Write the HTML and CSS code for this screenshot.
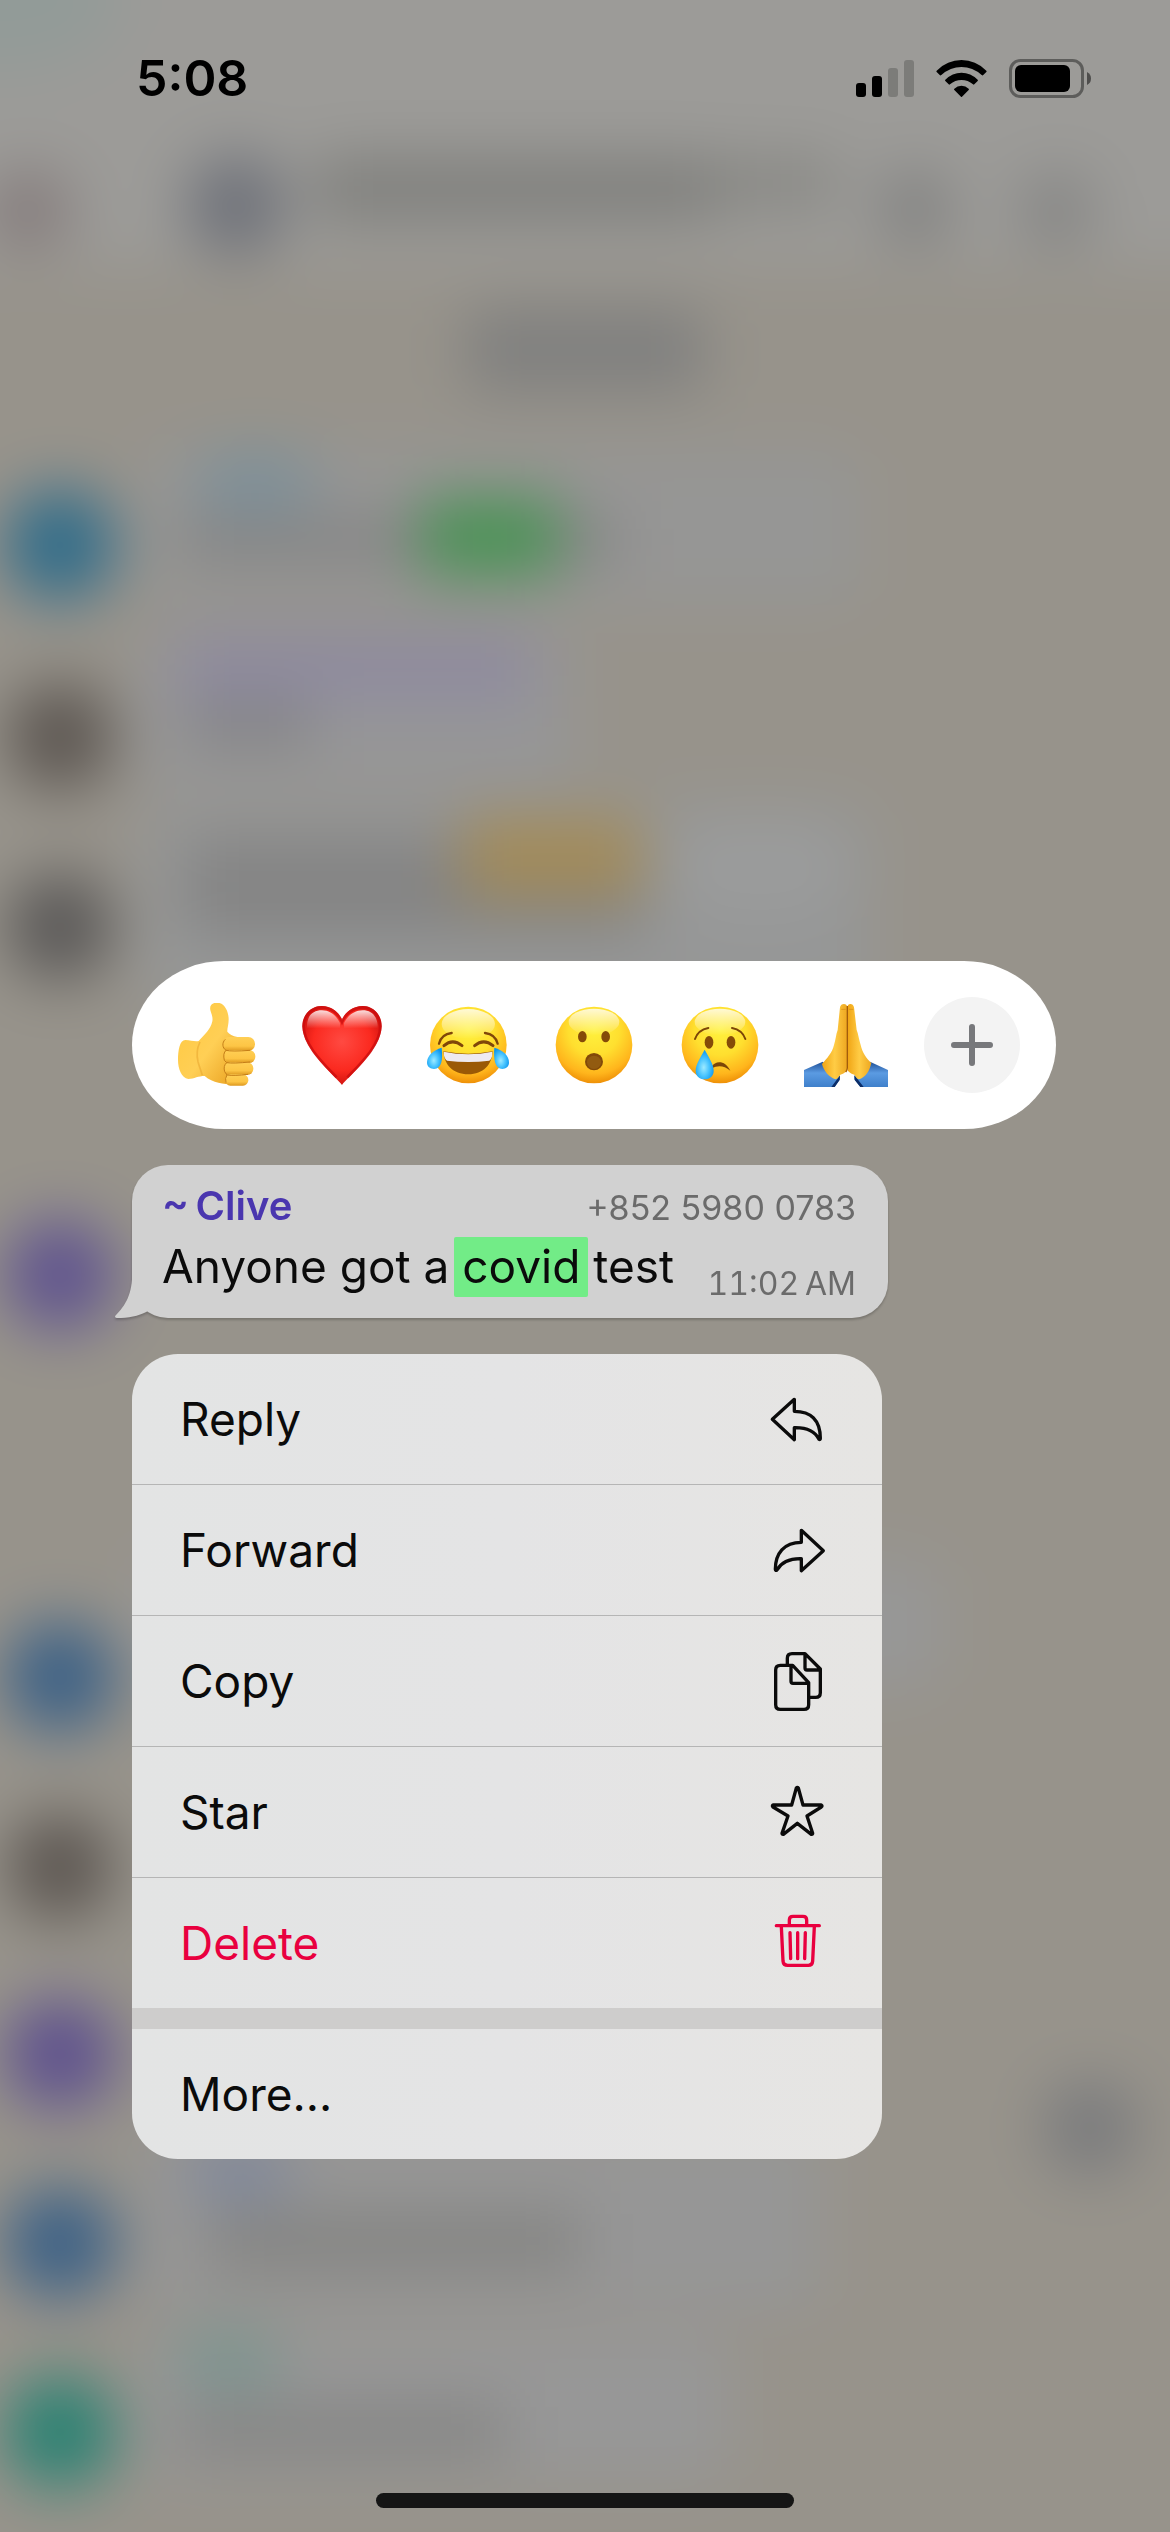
FILE: index.html
```html
<!DOCTYPE html>
<html lang="en">
<head>
<meta charset="utf-8">
<meta name="viewport" content="width=device-width, initial-scale=1">
<title>Message actions</title>
<link rel="stylesheet" href="styles.css">
</head>
<body>
<!-- Blurred chat behind the message actions -->
<svg class="backdrop" viewBox="0 0 1170 2532" preserveAspectRatio="none" aria-hidden="true">
  <defs>
    <filter id="soft" x="-10%" y="-10%" width="120%" height="120%" color-interpolation-filters="sRGB"><feGaussianBlur stdDeviation="30"/></filter>
  </defs>
  <g filter="url(#soft)">
    <rect x="-100" y="-100" width="1370" height="2732" fill="#97938b"/>
    <rect x="-100" y="-100" width="1370" height="365" fill="#9c9b98"/>
    <ellipse cx="0" cy="0" rx="120" ry="70" fill="#929b98"/>
    <rect x="140" y="450" width="720" height="155" rx="30" fill="#969695"/>
    <rect x="140" y="630" width="430" height="160" rx="30" fill="#969697"/>
    <rect x="140" y="805" width="730" height="200" rx="30" fill="#969797"/>
    <rect x="140" y="1560" width="800" height="130" rx="30" fill="#979797"/>
    <rect x="140" y="2130" width="680" height="180" rx="30" fill="#969696"/>
    <rect x="140" y="2330" width="590" height="150" rx="30" fill="#979797"/>
    <ellipse cx="28" cy="210" rx="44" ry="40" fill="#857c7c"/>
    <circle cx="236" cy="205" r="50" fill="#6f727a"/>
    <rect x="315" y="158" width="400" height="62" fill="#7f7f7c"/>
    <rect x="715" y="160" width="120" height="46" fill="#868682"/>
    <circle cx="915" cy="208" r="38" fill="#828281"/>
    <circle cx="1056" cy="210" r="38" fill="#858584"/>
    <rect x="465" y="308" width="240" height="84" rx="20" fill="#80807f"/>
    <ellipse cx="255" cy="482" rx="64" ry="30" fill="#7b909b"/>
    <rect x="180" y="518" width="440" height="42" fill="#838383"/>
    <rect x="422" y="498" width="136" height="78" fill="#4a9255"/>
    <rect x="180" y="638" width="350" height="60" fill="#8e8aa0"/>
    <rect x="190" y="702" width="120" height="42" fill="#828284"/>
    <rect x="185" y="838" width="460" height="98" fill="#848484"/>
    <rect x="462" y="818" width="180" height="78" fill="#a38b58"/>
    <ellipse cx="760" cy="866" rx="90" ry="46" fill="#9b9c9c"/>
    <circle cx="60" cy="545" r="56" fill="#326d8a"/>
    <circle cx="60" cy="737" r="54" fill="#5e5853"/>
    <circle cx="60" cy="927" r="54" fill="#5c5a59"/>
    <circle cx="60" cy="1275" r="56" fill="#61558e"/>
    <circle cx="60" cy="1677" r="56" fill="#3e6286"/>
    <circle cx="60" cy="1867" r="54" fill="#5e5853"/>
    <circle cx="60" cy="2054" r="56" fill="#5f528d"/>
    <circle cx="60" cy="2243" r="56" fill="#3e6286"/>
    <circle cx="60" cy="2432" r="56" fill="#2c8273"/>
    <circle cx="1090" cy="2128" r="48" fill="#7a7b7d"/>
    <ellipse cx="240" cy="2172" rx="54" ry="30" fill="#7e879c"/>
    <rect x="210" y="2212" width="370" height="58" fill="#848482"/>
    <ellipse cx="228" cy="2360" rx="56" ry="30" fill="#7b9590"/>
    <rect x="180" y="2404" width="325" height="52" fill="#858584"/>
  </g>
</svg>

<div class="screen">
  <header class="status-bar">
    <time class="clock">5:08</time>
    <div class="indicators">
      <svg width="58" height="39" viewBox="0 0 58 39" role="img" aria-label="Signal: 2 of 4 bars">
        <rect x="0" y="24" width="10" height="14" rx="3"/>
        <rect x="16" y="17" width="10" height="21" rx="3"/>
        <rect x="32" y="9" width="10" height="29" rx="3" opacity=".2"/>
        <rect x="48" y="1" width="10" height="37" rx="3" opacity=".2"/>
      </svg>
      <svg width="51" height="39" viewBox="289 54 151 117" role="img" aria-label="Wi-Fi">
        <path d="M290 89Q322 57 364.500 57Q407 57 439 89Q441 91 439 93L429 103Q427 104 425 102Q398 78 364.500 78Q331 78 304 102Q302 104 300 103L290 93Q288 91 290 89Z"/>
        <path d="M316 116Q337 95 364.500 95Q392 95 413 116Q415 118 413 120L403 130Q401 132 399 130Q384 117 364.500 117Q345 117 330 130Q328 132 326 130L316 120Q314 118 316 116Z"/>
        <path d="M343 143Q352 134 364.500 134Q377 134 386 143Q388 145 386 147L366 167Q364.500 169 363 167L343 147Q341 145 343 143Z"/>
      </svg>
      <svg width="82" height="39" viewBox="0 0 82 39" role="img" aria-label="Battery">
        <rect x="1.500" y="1.500" width="72" height="36" rx="10" fill="none" stroke="#000" stroke-opacity=".4" stroke-width="3"/>
        <rect x="6" y="6" width="55" height="27" rx="6"/>
        <path d="M78 13Q82 15 82 19.500Q82 24 78 26Z" opacity=".5"/>
      </svg>
    </div>
  </header>

  <main class="actions">
    <div class="reactions" role="toolbar" aria-label="Reactions">
      <button class="reaction" type="button" aria-label="Thumbs up">
        <svg viewBox="162 159 252 252">
          <defs>
            <linearGradient id="thumb" x1="0" y1="0" x2="1" y2="1"><stop offset="0" stop-color="#ffc83e"/><stop offset=".55" stop-color="#ffcf55"/><stop offset="1" stop-color="#e9a01f"/></linearGradient>
            <linearGradient id="finger" x1="0" y1="0" x2="0" y2="1"><stop offset="0" stop-color="#ffcf55"/><stop offset=".65" stop-color="#fdc545"/><stop offset="1" stop-color="#dd981f"/></linearGradient>
          </defs>
          <path fill="url(#thumb)" d="M272 184C266 165 278 158 291 158C314 158 326 185 326 208C326 225 321 237 322 245C328 252 338 258 352 261L352 403C320 404 282 402 254 378C235 378 223 386 205 387C184 383 174 357 174 330C174 302 179 270 196 270C213 270 224 276 236 273C252 255 272 239 277 214C279 202 275 194 272 184Z"/>
          <path d="M240 276C232 292 228 310 234 335C238 350 243 362 247 376" fill="none" stroke="#e8a52d" stroke-width="5" opacity=".55"/>
          <rect x="308" y="261" width="97" height="42" rx="20" fill="url(#finger)"/>
          <rect x="311" y="300" width="95" height="39" rx="19" fill="url(#finger)"/>
          <rect x="312" y="337" width="88" height="38" rx="18" fill="url(#finger)"/>
          <rect x="315" y="373" width="70" height="34" rx="16" fill="url(#finger)"/>
          <path d="M316 268C305 278 307 294 318 301Q308 310 313 331L320 338Q309 348 314 365L321 375Q314 384 318 398M318 301Q335 305 391 301M320 338Q340 341 390 336M322 375Q342 378 384 373" fill="none" stroke="#c47d17" stroke-width="3"/>
        </svg>
      </button>
      <button class="reaction" type="button" aria-label="Red heart">
        <svg viewBox="540 159 252 252">
          <defs>
            <radialGradient id="heart" cx=".5" cy=".45" r=".6"><stop offset="0" stop-color="#ff4a42"/><stop offset=".6" stop-color="#fb2a20"/><stop offset="1" stop-color="#c80f0c"/></radialGradient>
            <linearGradient id="heartShine" x1="0" y1="0" x2="0" y2="1"><stop offset="0" stop-color="#fff" stop-opacity=".85"/><stop offset="1" stop-color="#fff" stop-opacity="0"/></linearGradient>
          </defs>
          <path fill="url(#heart)" d="M666 405C650 383 547 298 547 229C547 194 573 168 605 168C635 168 657 186 666 210C675 186 698 168 728 168C760 168 785 194 785 229C785 298 682 383 666 405Z"/>
          <path fill="none" stroke="#c90c0d" stroke-width="8" opacity=".75" d="M650 382C610 340 552 286 551 229C551 196 576 172 605 172C634 172 656 192 666 216C676 192 700 172 728 172C757 172 781 196 781 229C780 286 722 340 682 382"/>
          <path fill="url(#heartShine)" d="M561 225C563 195 580 181 606 181C632 181 650 199 660 219V235H561ZM672 219C682 199 702 181 728 181C753 181 770 196 773 225V235H672Z"/>
        </svg>
      </button>
      <button class="reaction" type="button" aria-label="Tears of joy">
        <svg viewBox="918 159 252 252">
          <defs>
            <radialGradient id="face" cx=".5" cy=".3" r=".74"><stop offset="0" stop-color="#fff23e"/><stop offset=".45" stop-color="#ffdf2f"/><stop offset=".78" stop-color="#ffb51c"/><stop offset="1" stop-color="#e98400"/></radialGradient>
            <linearGradient id="shine" x1="0" y1="0" x2="0" y2="1"><stop offset="0" stop-color="#fff" stop-opacity=".8"/><stop offset="1" stop-color="#fff" stop-opacity="0"/></linearGradient>
            <radialGradient id="tear" cx=".45" cy=".6" r=".6"><stop offset="0" stop-color="#9eeaff"/><stop offset=".5" stop-color="#48c4ff"/><stop offset="1" stop-color="#0c95ed"/></radialGradient>
          </defs>
          <circle cx="1045" cy="285" r="115" fill="url(#face)"/>
          <ellipse cx="1045" cy="222" rx="80" ry="45" fill="url(#shine)"/>
          <path d="M957 281Q964 253 995 249M1133 281Q1126 253 1095 249" fill="none" stroke="#804709" stroke-width="7" stroke-linecap="round"/>
          <path d="M972 287Q998 264 1026 287M1064 287Q1091 264 1119 287" fill="none" stroke="#804709" stroke-width="9" stroke-linecap="round"/>
          <path d="M970 304Q1045 318 1118 304C1116 344 1090 373 1045 373C998 373 973 344 970 304Z" fill="#9a5906"/>
          <path d="M971 305Q1045 320 1117 305Q1118 325 1108 332Q1045 340 981 332Q971 325 971 305Z" fill="#eeeaf0"/>
          <path d="M965 293C940 300 921 318 921 337C921 351 931 357 942 357C965 356 969 329 965 293Z" fill="url(#tear)"/>
          <path d="M1123 293C1149 300 1167 318 1167 337C1167 351 1157 357 1147 357C1125 356 1120 329 1123 293Z" fill="url(#tear)"/>
        </svg>
      </button>
      <button class="reaction" type="button" aria-label="Surprised">
        <svg viewBox="1296 159 252 252">
          <circle cx="1422" cy="285" r="115" fill="url(#face)"/>
          <ellipse cx="1422" cy="216" rx="76" ry="40" fill="url(#shine)"/>
          <ellipse cx="1387" cy="260" rx="13" ry="17" fill="#854b08"/>
          <ellipse cx="1457" cy="260" rx="13" ry="17" fill="#854b08"/>
          <ellipse cx="1422" cy="335" rx="27" ry="26" fill="#824909"/>
          <ellipse cx="1422" cy="337" rx="21" ry="20" fill="#925b10"/>
        </svg>
      </button>
      <button class="reaction" type="button" aria-label="Crying">
        <svg viewBox="234 159 252 252">
          <circle cx="360" cy="285" r="115" fill="url(#face)"/>
          <ellipse cx="360" cy="216" rx="76" ry="40" fill="url(#shine)"/>
          <path d="M285 267Q294 240 325 234M436 267Q427 240 396 234" fill="none" stroke="#7c4507" stroke-width="6" stroke-linecap="round"/>
          <ellipse cx="327" cy="277" rx="13" ry="19" fill="#854b08"/>
          <ellipse cx="393" cy="277" rx="13" ry="19" fill="#854b08"/>
          <path d="M335 350C346 331 376 330 391 362C372 347 355 345 335 355Z" fill="#7c4507"/>
          <path d="M314 299C302 322 287 342 287 362C287 378 298 388 314 388C330 388 341 378 341 362C341 342 326 322 314 299Z" fill="url(#tear)"/>
        </svg>
      </button>
      <button class="reaction" type="button" aria-label="Folded hands">
        <svg viewBox="612 159 252 252">
          <defs>
            <linearGradient id="palm"><stop offset="0" stop-color="#f0a414"/><stop offset=".5" stop-color="#ffcc45"/><stop offset="1" stop-color="#eda720"/></linearGradient>
            <linearGradient id="sleeve" x1="0" y1="0" x2="0" y2="1"><stop offset="0" stop-color="#1f4f97"/><stop offset=".45" stop-color="#5b9be2"/><stop offset="1" stop-color="#3f80cb"/></linearGradient>
          </defs>
          <path d="M612 360L668 335L720 378V388L704 411H612ZM864 360L810 335L763 378V388L781 411H864Z" fill="url(#sleeve)"/>
          <path d="M720 376L719 390L704 411H694L714 384ZM763 376L764 390L781 411H791L770 384Z" fill="#0b2d68"/>
          <path d="M742 172C741 158 722 159 720 172L713 240C708 252 707 270 702 285C697 308 680 326 666 342C672 364 686 380 706 388C714 386 716 380 721 374C732 370 742 364 742 356Z" fill="url(#palm)"/>
          <path d="M742 172C743 158 760 159 762 172L770 240C775 252 777 270 782 285C787 308 800 326 814 339C808 364 798 380 778 388C769 386 768 380 763 374C752 370 742 364 742 356Z" fill="url(#palm)"/>
          <path d="M742 168V354Q741 362 737 366" stroke="#a35d0b" stroke-width="4" fill="none"/>
          <path d="M724 178H737M747 178H760" stroke="#df941a" stroke-width="3"/>
        </svg>
      </button>
      <button class="more-reactions" type="button" aria-label="More reactions">
        <svg width="42" height="42" viewBox="0 0 42 42"><path d="M21 3V39M3 21H39" stroke="#77787b" stroke-width="6" stroke-linecap="round"/></svg>
      </button>
    </div>

    <article class="bubble">
      <svg class="tail" viewBox="45 360 108 147" aria-hidden="true"><path d="M97 360C98 430 78 465 46 497Q43 503 50 504C85 504 115 498 140 485L153 470V360Z" fill="#d1d1d1"/></svg>
      <div class="bubble-head">
        <span class="sender">~&#8201;Clive</span>
        <span class="phone">+852 5980 0783</span>
      </div>
      <div class="bubble-body">
        <p class="message">Anyone got a <mark>covid</mark> test</p>
        <time class="sent">11:02&#8201;AM</time>
      </div>
    </article>

    <div class="menu" role="menu">
      <button class="item" type="button" role="menuitem">Reply
        <svg class="icon" viewBox="81 147 180 180"><path d="M163 178L97 238L163 299V263C205 262 226 276 237 298Q241 300 241 295C241 240 212 214 163 214Z"/></svg>
      </button>
      <button class="item" type="button" role="menuitem">Forward
        <svg class="icon" viewBox="81 540 180 180"><path d="M184 571L250 632L184 692V656C145 655 124 667 111 690Q106 693 106 688C106 640 132 607 184 607Z"/></svg>
      </button>
      <button class="item" type="button" role="menuitem">Copy
        <svg class="icon" viewBox="81 933 180 180"><path d="M142 972V955Q142 941 156 941H195L241 987V1058Q241 1072 227 1072H210M195 943V984Q195 990 201 990H240M121 976H158L206 1028V1094Q206 1108 192 1108H121Q107 1108 107 1094V990Q107 976 121 976ZM153 978V1024Q153 1030 159 1030H205"/></svg>
      </button>
      <button class="item" type="button" role="menuitem">Star
        <svg class="icon" viewBox="81 66 180 180"><path d="M169 84Q172 80 175 84L189 135H244Q248 138 244 141L201 168L218 220Q218 224 214 223L172 190L130 223Q126 224 126 220L144 168L99 141Q96 138 99 135H155Z"/></svg>
      </button>
      <button class="item item-danger" type="button" role="menuitem">Delete
        <svg class="icon" viewBox="81 459 180 180"><path d="M109 497H238M148 497V480Q148 469 159 469H189Q200 469 200 480V497M124 500L129 603Q130 616 143 616H205Q217 616 218 603L223 500M150 518L152 596M173 518V596M196 518L194 596"/></svg>
      </button>
      <button class="item" type="button" role="menuitem">More...</button>
    </div>
  </main>

  <div class="home-indicator"></div>
</div>
</body>
</html>
```

FILE: styles.css
```css
* {
  box-sizing: border-box;
}

body {
  margin: 0;
  background: #97938c;
  color: #0b0b0b;
  font-family: Inter, "Liberation Sans", sans-serif;
}

button {
  margin: 0;
  padding: 0;
  border: 0;
  background: none;
  color: inherit;
  font: inherit;
}

svg {
  display: block;
  flex: none;
}

.backdrop {
  position: absolute;
  inset: 0;
  z-index: -1;
  width: 100%;
  height: 100%;
}

.screen {
  display: flex;
  flex-direction: column;
  min-height: 100vh;
  padding-bottom: 24px;
}

/* Status bar */
.status-bar {
  display: flex;
  align-items: center;
  justify-content: space-between;
  height: 156px;
  padding: 0 79px 0 136px;
  color: #000;
}

.clock {
  font-size: 50px;
  font-weight: 600;
}

.indicators {
  display: flex;
  gap: 22px;
}

/* Message actions */
.actions {
  display: flex;
  flex: 1;
  flex-direction: column;
  align-items: flex-start;
  gap: 36px;
  padding: 805px 114px 0 132px;
}

.reactions {
  display: flex;
  align-items: center;
  gap: 42px;
  height: 168px;
  padding: 0 36px 0 42px;
  border-radius: 92px / 84px;
  background: #fff;
}

.reaction svg {
  width: 84px;
  height: 84px;
}

.more-reactions {
  display: grid;
  place-items: center;
  width: 96px;
  height: 96px;
  margin-left: -6px;
  border-radius: 50%;
  background: #f3f3f3;
}

/* Message bubble */
.bubble {
  position: relative;
  width: 756px;
  max-width: 100%;
  padding: 15px 32px 22px 30px;
  border-radius: 36px;
  background: #d1d1d1;
  filter: drop-shadow(0 2px 1px rgb(0 0 0 / 20%));
}

.tail {
  position: absolute;
  bottom: -1px;
  left: -17px;
  width: 36px;
  height: 49px;
}

.bubble-head,
.bubble-body {
  display: flex;
  justify-content: space-between;
}

.bubble-head {
  align-items: baseline;
  margin-bottom: 4px;
}

.bubble-body {
  align-items: flex-end;
}

.sender {
  color: #4a36af;
  font-size: 40px;
  font-weight: 600;
  line-height: 52px;
}

.phone,
.sent {
  color: #6b6b6b;
  font-size: 34px;
  line-height: 40px;
}

.sent {
  margin-bottom: -8px;
  font-size: 32px;
  font-variant-numeric: tabular-nums;
}

.message {
  margin: 0;
  font-size: 46px;
  line-height: 60px;
}

mark {
  margin: 0 -8px;
  padding: 1px 8px 3px;
  border-radius: 2px;
  background: #72ec87;
  color: inherit;
}

/* Context menu */
.menu {
  display: flex;
  flex-direction: column;
  width: 750px;
  max-width: 100%;
  overflow: hidden;
  border-radius: 46px;
  background: linear-gradient(90deg, #e3e4e4, #e4e4e5 50%, #e6e5e3);
}

.item {
  display: flex;
  align-items: center;
  justify-content: space-between;
  height: 131px;
  padding: 0 55px 0 48px;
  border-bottom: 1px solid #b5b5b5;
  font-size: 46px;
  text-align: left;
}

.item-danger {
  height: 151px;
  border-bottom: 21px solid #cecdcc;
  color: #e9003f;
}

.item:last-child {
  height: 130px;
  border-bottom: 0;
}

.icon {
  width: 60px;
  height: 60px;
  fill: none;
  stroke: currentColor;
  stroke-width: 10;
  stroke-linecap: round;
  stroke-linejoin: round;
}

.home-indicator {
  align-self: center;
  width: 418px;
  height: 15px;
  border-radius: 8px;
  background: #151515;
}
```
